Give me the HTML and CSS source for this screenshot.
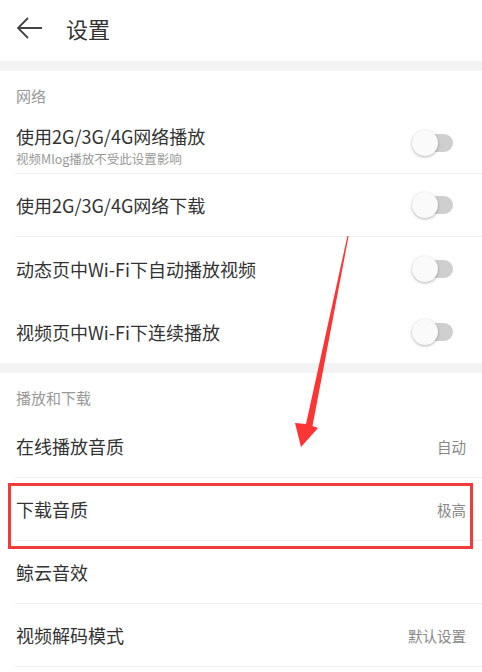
FILE: index.html
```html
<!DOCTYPE html>
<html lang="zh-CN">

<head>
    <meta charset="UTF-8">
    <meta name="viewport" content="width=device-width, initial-scale=1.0">
    <title>设置</title>
    <link rel="stylesheet" href="styles.css">
</head>

<body>
    <div class="page">
        <div class="topbar">
            <svg class="back" width="28" height="24" viewBox="0 0 28 24">
                <path d="M26 12 H3 M12 2 L2 12 L12 22" fill="none" stroke="#444" stroke-width="1.8" />
            </svg>
            <h1 class="title">设置</h1>
        </div>

        <div class="gap"></div>
        <div class="section-label">网络</div>
        <div class="row row-sub line">
            <div class="text">
                <div class="name">使用2G/3G/4G网络播放</div>
                <div class="sub">视频Mlog播放不受此设置影响</div>
            </div>
            <span class="switch"></span>
        </div>
        <div class="row line">
            <div class="name">使用2G/3G/4G网络下载</div>
            <span class="switch"></span>
        </div>
        <div class="row">
            <div class="name">动态页中Wi-Fi下自动播放视频</div>
            <span class="switch"></span>
        </div>
        <div class="row">
            <div class="name">视频页中Wi-Fi下连续播放</div>
            <span class="switch"></span>
        </div>

        <div class="gap"></div>
        <div class="section-label">播放和下载</div>
        <div class="row line">
            <div class="name">在线播放音质</div>
            <span class="value">自动</span>
        </div>
        <div class="row line">
            <div class="name">下载音质</div>
            <span class="value">极高</span>
        </div>
        <div class="row line">
            <div class="name">鲸云音效</div>
        </div>
        <div class="row line">
            <div class="name">视频解码模式</div>
            <span class="value">默认设置</span>
        </div>

        <!-- annotation marks drawn over the screenshot -->
        <div class="mark-box"></div>
        <svg class="mark-arrow" width="482" height="672" viewBox="0 0 482 672">
            <polygon points="347.4,236 348.6,236 312.5,426 318,428 301,447 295,423 306,424" fill="#ff3535" />
        </svg>
    </div>
</body>

</html>
```

FILE: styles.css
```css
* {
    margin: 0px;
    padding: 0px;
    box-sizing: border-box;
}

body {
    background-color: #fff;
    font-family: "Noto Sans CJK SC", "Noto Sans", sans-serif;
    color: #333;
}

.page {
    position: relative;
    width: 482px;
    height: 672px;
    overflow: hidden;
}

.topbar {
    height: 61px;
    display: flex;
    align-items: center;
    padding: 0 0 5px 16px;
    gap: 22px;
}

.title {
    font-size: 22px;
    font-weight: normal;
    color: #333;
    line-height: 1;
}

.gap {
    height: 10px;
    background-color: #f3f3f3;
}

.section-label {
    height: 42px;
    padding: 14px 0 0 16px;
    font-size: 15px;
    line-height: 22px;
    color: #999;
}

.row {
    height: 63px;
    margin-left: 15px;
    padding-right: 16px;
    display: flex;
    align-items: center;
    justify-content: space-between;
}

.row-sub {
    height: 61px;
    padding-top: 4px;
}

.line {
    border-bottom: 1px solid #efefef;
}

.name {
    font-size: 18px;
    line-height: 24px;
    padding-left: 1px;
}

.sub {
    font-size: 12.5px;
    line-height: 15px;
    color: #999;
    padding-left: 1px;
    margin-top: 3px;
}

.value {
    font-size: 14.5px;
    color: #888;
}

.switch {
    position: relative;
    width: 40px;
    height: 18px;
    margin-right: 13px;
    border-radius: 9px;
    background-color: #cfcfcf;
}

.row-sub .switch {
    margin-top: -4px;
}

.switch::before {
    content: "";
    position: absolute;
    left: -1px;
    top: -4px;
    width: 26px;
    height: 26px;
    border-radius: 50%;
    background-color: #fafafa;
    box-shadow: 0 1px 3px rgba(0, 0, 0, 0.3);
}

.mark-box {
    position: absolute;
    left: 8px;
    top: 483px;
    width: 465px;
    height: 66px;
    border: 3px solid #f23c3c;
}

.mark-arrow {
    position: absolute;
    left: 0;
    top: 0;
}
```
